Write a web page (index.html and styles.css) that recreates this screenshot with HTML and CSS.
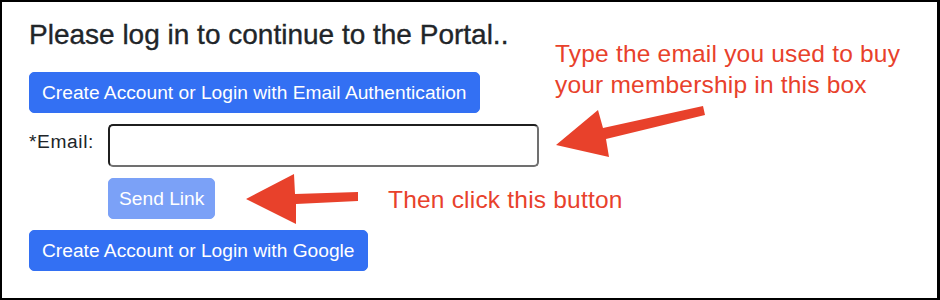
FILE: index.html
```html
<!DOCTYPE html>
<html lang="en">
<head>
<meta charset="utf-8">
<title>Portal login</title>
<link rel="stylesheet" href="styles.css">
</head>
<body>
<div class="frame">
  <h3 class="title">Please log in to continue to the Portal..</h3>
  <div class="stack">
    <button class="btn" type="button">Create Account or Login with Email Authentication</button>
    <div class="row">
      <label class="label" for="email">*Email:</label>
      <input class="input" id="email" type="email">
    </div>
    <button class="btn btn-disabled" type="button">Send Link</button>
    <button class="btn" type="button">Create Account or Login with Google</button>
  </div>
</div>
<div class="note note-email">Type the email you used to buy<br>your membership in this box</div>
<div class="note note-button">Then click this button</div>
<svg class="arrows" width="940" height="300" viewBox="0 0 940 300">
  <polygon points="703,106 705,115 606,139 609,157 556,145 598,110 603,128"/>
  <polygon points="358,192 358,201 296,204 296,224 246,199 294,174 295,194"/>
</svg>
</body>
</html>
```
FILE: styles.css
```css
html, body {
  margin: 0;
  padding: 0;
  background: #fff;
}
body {
  position: relative;
  width: 940px;
  height: 300px;
  font-family: "Liberation Sans", Arial, sans-serif;
  overflow: hidden;
}
.frame {
  box-sizing: border-box;
  width: 940px;
  height: 300px;
  border: 2px solid #000;
  border-right-width: 3px;
  padding: 16px 0 0 27px;
}
.title {
  margin: 0 0 20px;
  font-size: 28px;
  line-height: 34px;
  font-weight: 400;
  color: #212529;
  -webkit-text-stroke: 0.35px #212529;
}
.stack {
  display: flex;
  flex-direction: column;
  align-items: flex-start;
  gap: 11px;
}
.btn {
  box-sizing: border-box;
  height: 41px;
  padding: 0 12px;
  margin: 0;
  border: 1px solid #3370f3;
  border-radius: 5px;
  background: #3370f3;
  color: #fff;
  font-family: "Liberation Sans", Arial, sans-serif;
  font-size: 19.2px;
  line-height: 39px;
  white-space: nowrap;
}
.btn-disabled {
  margin-left: 79px;
  background: #7ba1f7;
  border-color: #7ba1f7;
  padding: 0 10px;
}
.row {
  display: flex;
  align-items: flex-start;
  height: 43px;
}
.label {
  width: 79px;
  padding-top: 6px;
  font-size: 19.2px;
  line-height: 23px;
  letter-spacing: 0.6px;
  color: #212529;
}
.input {
  box-sizing: border-box;
  width: 431px;
  height: 43px;
  margin: 0;
  border: 2px solid;
  border-color: #1f1f1f #707070 #707070 #1f1f1f;
  border-radius: 5px;
  background: #fff;
  outline: none;
}
.note {
  position: absolute;
  color: #e8412b;
  font-size: 24.5px;
  line-height: 31px;
  letter-spacing: 0.2px;
  white-space: nowrap;
}
.note-email {
  left: 555px;
  top: 38px;
}
.note-button {
  left: 388px;
  top: 184px;
}
.arrows {
  position: absolute;
  left: 0;
  top: 0;
  fill: #e8412b;
  pointer-events: none;
}
```
